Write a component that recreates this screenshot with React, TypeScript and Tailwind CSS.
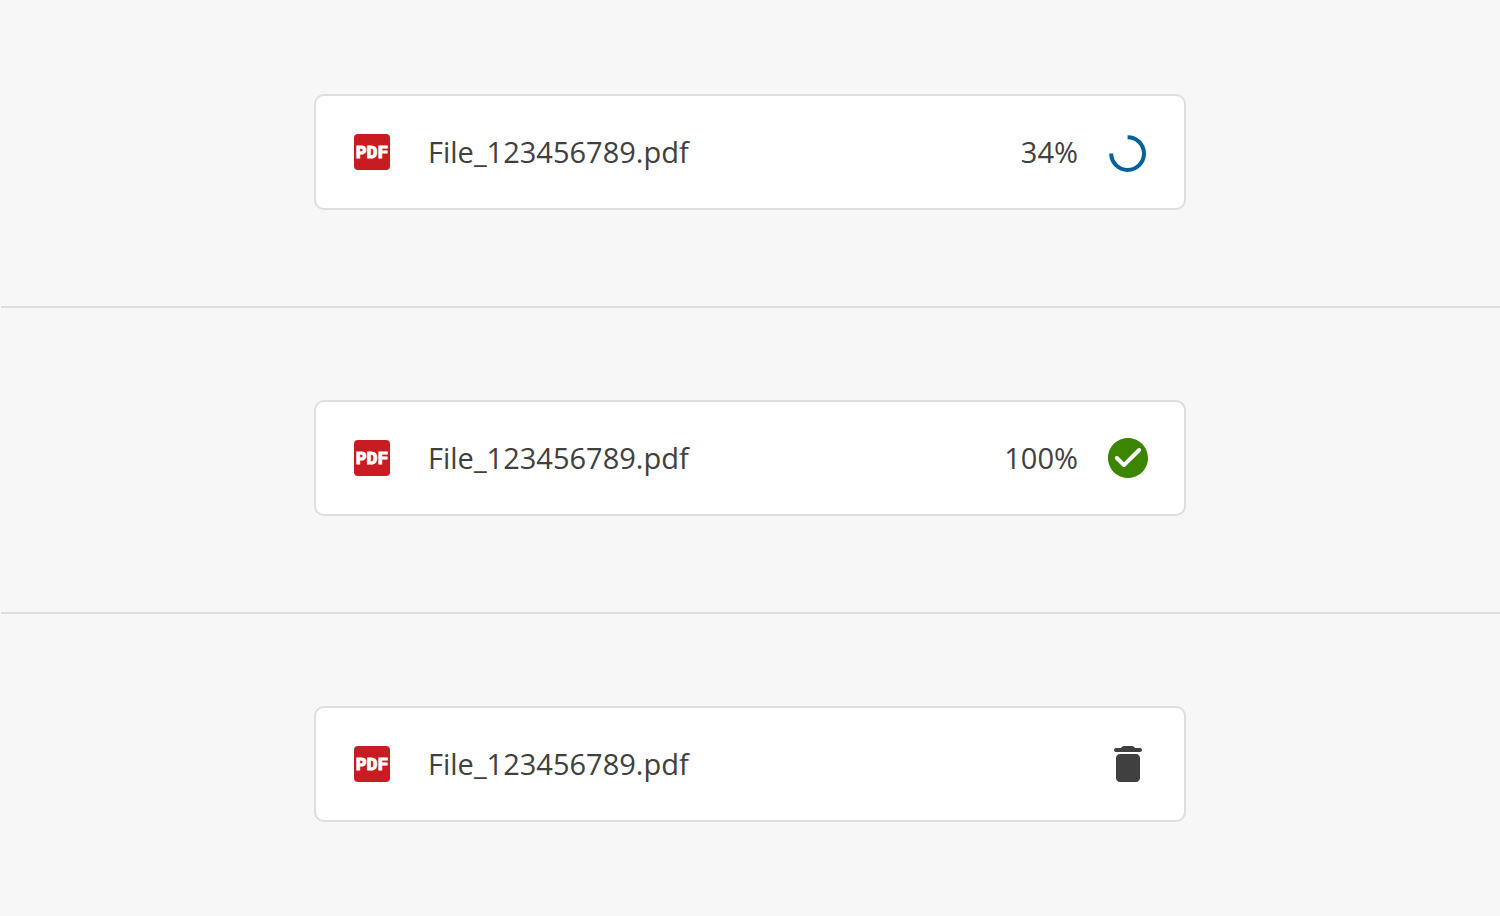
import React from "react";

type Status = "uploading" | "complete" | "ready";

interface Upload {
  id: number;
  name: string;
  status: Status;
  progress?: number;
}

const uploads: Upload[] = [
  { id: 1, name: "File_123456789.pdf", status: "uploading", progress: 34 },
  { id: 2, name: "File_123456789.pdf", status: "complete", progress: 100 },
  { id: 3, name: "File_123456789.pdf", status: "ready" },
];

function PdfIcon() {
  return (
    <div className="flex size-12 shrink-0 items-center justify-center">
      <div className="flex size-9 items-center justify-center rounded bg-[#c81c22] pt-0.5 font-['Liberation_Mono',monospace] text-[18px] leading-none font-bold text-white [-webkit-text-stroke:1px_white]">
        PDF
      </div>
    </div>
  );
}

function SpinnerIcon() {
  return (
    <svg viewBox="0 0 48 48" className="size-12 shrink-0" fill="none" aria-hidden="true">
      <path d="M23.6 9.2A16.4 16.4 0 1 1 7.2 25.6" stroke="#00629b" strokeWidth="4" />
    </svg>
  );
}

function CheckCircleIcon() {
  return (
    <svg viewBox="0 0 24 24" className="size-12 shrink-0 text-[#3b8500]" fill="currentColor" aria-hidden="true">
      <path d="M12 2C6.48 2 2 6.48 2 12s4.48 10 10 10 10-4.48 10-10S17.52 2 12 2zM9.29 16.29L5.7 12.7a.996.996 0 0 1 0-1.41c.39-.39 1.02-.39 1.41 0L10 14.17l6.88-6.88c.39-.39 1.02-.39 1.41 0 .39.39.39 1.02 0 1.41l-7.59 7.59c-.38.39-1.02.39-1.41 0z" />
    </svg>
  );
}

function DeleteIcon() {
  return (
    <svg viewBox="0 0 24 24" className="size-12" fill="currentColor" aria-hidden="true">
      <path d="M6 19c0 1.1.9 2 2 2h8c1.1 0 2-.9 2-2V9c0-1.1-.9-2-2-2H8c-1.1 0-2 .9-2 2v10zM18 4h-2.5l-.71-.71c-.18-.18-.44-.29-.7-.29H9.91c-.26 0-.52.11-.7.29L8.5 4H6c-.55 0-1 .45-1 1s.45 1 1 1h12c.55 0 1-.45 1-1s-.45-1-1-1z" />
    </svg>
  );
}

function FileCard({ upload }: { upload: Upload }) {
  return (
    <div className="mx-auto flex w-full max-w-[872px] items-center gap-8 rounded-[10px] border-2 border-[#dedede] bg-white p-8 text-[29px] leading-10 text-[#404040]">
      <PdfIcon />
      <span className="min-w-0 flex-1 truncate">{upload.name}</span>
      <div className="flex items-center gap-[26px]">
        {upload.progress !== undefined && <span>{upload.progress}%</span>}
        {upload.status === "uploading" && <SpinnerIcon />}
        {upload.status === "complete" && <CheckCircleIcon />}
        {upload.status === "ready" && (
          <button type="button" aria-label="Delete file" className="shrink-0 cursor-pointer">
            <DeleteIcon />
          </button>
        )}
      </div>
    </div>
  );
}

export default function App() {
  return (
    <main className="min-h-screen bg-[#f7f7f7] font-['Open_Sans','Noto_Sans',sans-serif]">
      {uploads.map((upload, index) => (
        <React.Fragment key={upload.id}>
          {index > 0 && <hr className="ml-px border-t-2 border-[#dedede]" />}
          <section className="px-4 pt-23 pb-24 first:pt-[94px] last:pb-[94px]">
            <FileCard upload={upload} />
          </section>
        </React.Fragment>
      ))}
    </main>
  );
}
